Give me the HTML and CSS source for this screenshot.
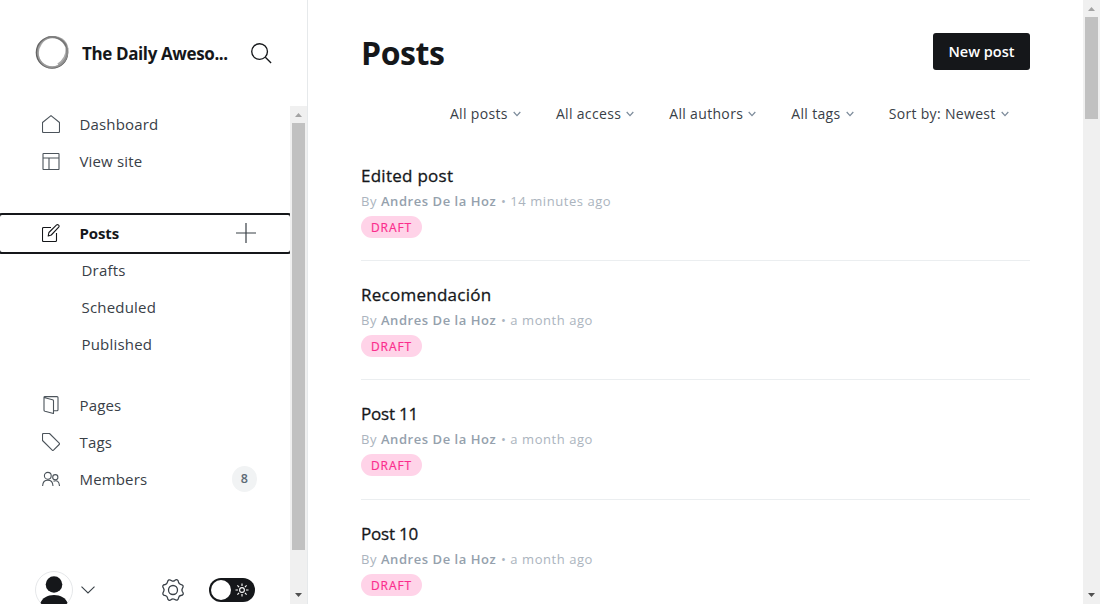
FILE: index.html
```html
<!DOCTYPE html>
<html lang="en">
<head>
<meta charset="utf-8">
<title>Posts - The Daily Awesome</title>
<link rel="stylesheet" href="styles.css">
</head>
<body>
<div class="app">
  <aside class="sidebar">
    <header class="brand">
      <svg class="brand-logo" viewBox="0 0 36 36" fill="none">
        <circle cx="17" cy="17.500" r="15.500" stroke="#444" stroke-width="1.600" opacity=".85"/>
        <ellipse cx="17.300" cy="17.300" rx="14.800" ry="15" stroke="#777" stroke-width="1.900" opacity=".7"/>
        <ellipse cx="18" cy="17" rx="14.400" ry="15.700" stroke="#999" stroke-width="1.400" opacity=".8" transform="rotate(35 18 17)"/>
        <path d="M12 2.500c8-2 16 1 19.500 8" stroke="#777" stroke-width="1.500" opacity=".7"/>
        <path d="M32 13c0 8-3 13-9 16.500" stroke="#888" stroke-width="2.600" opacity=".7"/>
      </svg>
      <span class="brand-name">The Daily Aweso...</span>
      <svg class="search-icon" viewBox="0 0 24 24"><circle cx="10" cy="10" r="8.200"/><path d="M16 16l6 6"/></svg>
    </header>
    <div class="sidebar-body">
      <div class="sidebar-main">
        <nav class="nav">
          <a class="nav-row"><svg class="icon" viewBox="0 0 18 18"><path d="M.5 7.500v9q0 1 1 1h15q1 0 1-1v-9L9 .6z"/></svg><span>Dashboard</span></a>
          <a class="nav-row"><svg class="icon" viewBox="0 0 18 18"><rect x="1" y="1.500" width="16" height="16" rx=".6"/><path d="M1 6h16M7 6v11.500"/></svg><span>View site</span></a>
          <a class="nav-row nav-active"><svg class="icon" viewBox="0 0 18 18"><path d="M9 3.500H1.500q-1 0-1 1v12q0 1 1 1h12q1 0 1-1V9M6.200 12l.7-3.500L14.600.9q1-.7 2 .2t.1 2L9.300 11z"/></svg><span>Posts</span><svg class="plus" viewBox="0 0 20 20"><path d="M10 0v20M0 10h20"/></svg></a>
          <a class="nav-row nav-sub">Drafts</a>
          <a class="nav-row nav-sub">Scheduled</a>
          <a class="nav-row nav-sub">Published</a>
          <a class="nav-row nav-group"><svg class="icon" viewBox="0 0 18 18"><path d="M2 1.500l8.500 2.200q1 .3 1 1v12.800L3 15.300q-1-.3-1-1zM2 1.200Q2 .6 3 .6h12q1 0 1 1v12.200q0 1-1 1h-3.500"/></svg><span>Pages</span></a>
          <a class="nav-row"><svg class="icon" viewBox="0 0 18 18"><path d="M.5 1.500Q.5.500 1.500.500h6l9.700 9.700q.6.700 0 1.300l-5.700 5.700q-.7.600-1.300 0L.5 7.500z"/></svg><span>Tags</span></a>
          <a class="nav-row"><svg class="icon" viewBox="0 0 18 18"><circle cx="5.800" cy="5.800" r="3.400"/><circle cx="13.300" cy="7.200" r="2.600"/><path d="M.6 16q.3-5.900 5.200-5.900T11 16M11.500 11.200q5.500-2 6 4.800"/></svg><span>Members</span><span class="count">8</span></a>
        </nav>
        <footer class="account">
          <svg class="avatar" viewBox="0 0 38 38"><circle cx="19" cy="19" r="18.500" fill="#fff" stroke="#e5e7e9"/><circle cx="19" cy="13.500" r="8.300" fill="#15171a"/><path d="M5.500 32c1.500-5 7-8 13.500-8s12 3 13.500 8c-3 3.500-8 5.500-13.500 5.500S8.500 35.500 5.500 32z" fill="#15171a"/></svg>
          <svg class="account-caret" viewBox="0 0 14 8"><path d="M.5.7L7 7 13.500.7"/></svg>
          <svg class="gear" viewBox="0 0 24 24"><circle cx="12" cy="12" r="4.500"/><path d="M9.900 2.700Q10.800 1 12 1t2.100 1.700q1 1.500 2.700 1.200 2.100-.4 2.900.4t.4 2.900q-.3 1.700 1.200 2.700Q23 10.800 23 12t-1.700 2.100q-1.500 1-1.200 2.700.4 2.100-.4 2.900t-2.900.4q-1.700-.3-2.700 1.200Q13.200 23 12 23t-2.100-1.700q-1-1.500-2.700-1.200-2.100.4-2.900-.4t-.4-2.900q.3-1.700-1.200-2.700Q1 13.200 1 12t1.700-2.100q1.500-1 1.200-2.700-.4-2.100.4-2.900t2.900-.4q1.700.3 2.700-1.200z" transform="rotate(22.500 12 12)"/></svg>
          <span class="toggle"><span class="knob"></span><svg class="sun" viewBox="0 0 14 14"><circle cx="7" cy="7" r="2.400"/><path d="M7 .5V3M7 11v2.500M.5 7H3M11 7h2.500M2.400 2.400l1.700 1.700M9.900 9.900l1.700 1.700M2.400 11.600l1.700-1.700M9.900 4.100l1.700-1.700"/></svg></span>
        </footer>
      </div>
      <div class="scrollbar"><svg class="arrow arrow-up" viewBox="0 0 17 17"><path d="M5 11h7L8.500 7z"/></svg><div class="thumb thumb-side"></div><svg class="arrow arrow-down" viewBox="0 0 17 17"><path d="M5 6h7l-3.500 4z"/></svg></div>
    </div>
  </aside>
  <main class="main">
    <header class="page-head"><h1 class="page-title">Posts</h1><button class="new-post">New post</button></header>
    <div class="filters">
      <span class="filter">All posts<svg class="caret" viewBox="0 0 8 6"><path d="M.7 1L4 4.700 7.300 1"/></svg></span>
      <span class="filter">All access<svg class="caret" viewBox="0 0 8 6"><path d="M.7 1L4 4.700 7.300 1"/></svg></span>
      <span class="filter">All authors<svg class="caret" viewBox="0 0 8 6"><path d="M.7 1L4 4.700 7.300 1"/></svg></span>
      <span class="filter">All tags<svg class="caret" viewBox="0 0 8 6"><path d="M.7 1L4 4.700 7.300 1"/></svg></span>
      <span class="filter">Sort by: Newest<svg class="caret" viewBox="0 0 8 6"><path d="M.7 1L4 4.700 7.300 1"/></svg></span>
    </div>
    <section class="posts">
      <article class="post"><h3 class="post-title">Edited post</h3><p class="meta">By <b class="author">Andres De la Hoz</b> • 14 minutes ago</p><span class="badge">DRAFT</span></article>
      <article class="post"><h3 class="post-title">Recomendación</h3><p class="meta">By <b class="author">Andres De la Hoz</b> • a month ago</p><span class="badge">DRAFT</span></article>
      <article class="post"><h3 class="post-title title-numbered">Post 11</h3><p class="meta">By <b class="author">Andres De la Hoz</b> • a month ago</p><span class="badge">DRAFT</span></article>
      <article class="post"><h3 class="post-title title-numbered">Post 10</h3><p class="meta">By <b class="author">Andres De la Hoz</b> • a month ago</p><span class="badge">DRAFT</span></article>
    </section>
  </main>
  <div class="scrollbar"><svg class="arrow arrow-up" viewBox="0 0 17 17"><path d="M5 11h7L8.500 7z"/></svg><div class="thumb thumb-page"></div><svg class="arrow arrow-down" viewBox="0 0 17 17"><path d="M5 6h7l-3.500 4z"/></svg></div>
</div>
</body>
</html>
```
FILE: styles.css
```css
* { box-sizing: border-box; }
body { margin: 0; background: #fff; color: #15171a; font-family: "Open Sans", "Noto Sans", sans-serif; }
svg { display: block; flex: none; }
.app { display: flex; height: 604px; overflow: hidden; }

.sidebar { width: 308px; flex: none; display: flex; flex-direction: column; border-right: 1px solid #e6e9eb; }
.brand { height: 106px; flex: none; display: flex; align-items: center; padding-left: 35px; }
.brand-logo { width: 36px; height: 36px; }
.brand-name { width: 147px; margin-left: 11px; font-size: 17px; font-weight: 700; letter-spacing: -0.38px; white-space: nowrap; }
.search-icon { width: 23px; height: 23px; margin-left: 21px; fill: none; stroke: #15171a; stroke-width: 1.4; }
.sidebar-body { flex: 1; display: flex; min-height: 0; }
.sidebar-main { width: 290px; flex: none; display: flex; flex-direction: column; }
.nav { flex: none; }
.nav-row { height: 37px; display: flex; align-items: center; padding: 0 0 2px 42px; font-size: 15px; letter-spacing: 0.15px; color: #394047; white-space: nowrap; }
.icon { width: 18px; height: 18px; margin-right: 19.5px; fill: none; stroke: #4c545b; stroke-width: 1.1; stroke-linejoin: round; }
.nav-active { margin-top: 35px; outline: 2px solid #15171a; border-radius: 2px; font-weight: 700; color: #15171a; letter-spacing: -0.1px; }
.nav-active .icon { stroke: #15171a; }
.plus { width: 20px; height: 20px; margin-left: auto; margin-right: 34px; fill: none; stroke: #394047; stroke-width: 1.2; }
.nav-sub { padding-left: 81.5px; letter-spacing: 0.2px; }
.nav-group { margin-top: 24px; }
.count { width: 25px; height: 26px; margin-left: auto; margin-right: 33px; border-radius: 13px; background: #f1f3f4; color: #5d6a75; font-size: 12.5px; font-weight: 600; line-height: 26px; text-align: center; }
.account { flex: none; height: 38px; margin-top: 73px; display: flex; align-items: center; padding-left: 35px; }
.avatar { width: 38px; height: 38px; }
.account-caret { width: 14px; height: 8px; margin-left: 8px; fill: none; stroke: #394047; stroke-width: 1.1; }
.gear { width: 24px; height: 24px; margin-left: 66px; fill: none; stroke: #394047; stroke-width: 1.3; }
.toggle { width: 46px; height: 24px; margin-left: 24px; border-radius: 12px; background: #15171a; display: flex; align-items: center; padding-left: 2px; }
.knob { width: 20px; height: 20px; border-radius: 50%; background: #fff; }
.sun { width: 14px; height: 14px; margin-left: 4px; fill: none; stroke: #fff; stroke-width: 1.1; }

.scrollbar { width: 17px; flex: none; display: flex; flex-direction: column; align-items: center; background: #f0f0f0; }
.arrow { width: 17px; height: 17px; fill: #505050; }
.arrow-up { fill: #a3a3a3; }
.arrow-down { margin-top: auto; }
.thumb { width: 13px; background: #c1c1c1; }
.thumb-side { height: 427px; }
.thumb-page { height: 102px; }

.main { flex: 1; min-width: 0; padding: 33px 53px 0; }
.page-head { height: 41px; display: flex; align-items: flex-start; justify-content: space-between; }
.page-title { margin: 0; font-size: 32px; line-height: 39px; font-weight: 700; letter-spacing: -0.4px; }
.new-post { width: 97px; height: 37px; padding: 0; border: 0; border-radius: 3px; background: #15171a; color: #fff; font: 600 14.5px "Open Sans", sans-serif; letter-spacing: 0; }
.filters { height: 67.7px; padding: 11px 21px 0 0; display: flex; justify-content: flex-end; align-items: center; gap: 34.8px; font-size: 14px; letter-spacing: 0.33px; color: #394047; }
.filter { display: flex; align-items: center; white-space: nowrap; }
.caret { width: 8px; height: 6px; margin: 2px 0 0 5.3px; fill: none; stroke: #7c8b9a; stroke-width: 1.2; }
.post { height: 119.33px; padding-top: 21px; border-bottom: 1px solid #ebeef0; }
.post-title { margin: 0; font-size: 17px; line-height: 26px; font-weight: 400; letter-spacing: 0.26px; -webkit-text-stroke: 0.3px #15171a; }
.title-numbered { letter-spacing: -0.2px; }
.meta { margin: 0; font-size: 13px; line-height: 24px; letter-spacing: 0.55px; color: #abb4be; white-space: nowrap; }
.author { margin-right: 0.7px; font-weight: 600; color: #95a1ad; }
.badge { display: block; width: 61px; height: 22px; margin-top: 3px; padding-top: 1px; border-radius: 11px; background: #ffd3e8; color: #fb2d8d; font-size: 12px; line-height: 22px; letter-spacing: 0.9px; text-align: center; -webkit-text-stroke: 0.2px #fb2d8d; }
```
